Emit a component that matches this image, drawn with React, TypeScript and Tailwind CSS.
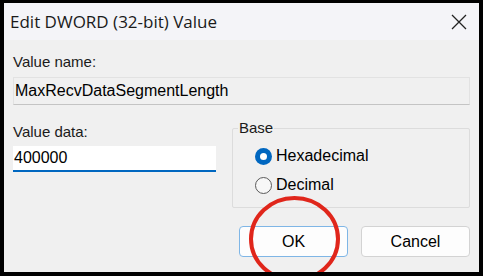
import React from "react";

const FONT = { fontFamily: '"Liberation Sans", Arial, sans-serif' };

function Radio({ checked, label }: { checked?: boolean; label: string }) {
  return (
    <div className="flex items-center h-[24px]">
      {checked ? (
        <span className="w-[17px] h-[17px] rounded-full bg-[#0067c0] flex items-center justify-center">
          <span className="w-[7px] h-[7px] rounded-full bg-white" />
        </span>
      ) : (
        <span className="w-[17px] h-[17px] rounded-full border border-[#5a5a5a] bg-[#f7f7f7]" />
      )}
      <span className="ml-[4px] text-[16px] text-black">{label}</span>
    </div>
  );
}

export default function App() {
  return (
    <div
      className="w-[483px] h-[276px] bg-black pt-[3px] pl-[4px] pr-[4px] pb-[4px]"
      style={FONT}
    >
      <div className="relative w-full h-full overflow-hidden bg-[#f0f0f0] flex flex-col">
        {/* Title bar */}
        <div className="h-[37px] shrink-0 bg-[#f4f4f8] flex items-center justify-between pl-[6px] pr-[11px]">
          <span
            className="text-[17px] text-[#1a1a1a]"
            style={{ fontFamily: '"Open Sans", "Noto Sans", sans-serif' }}
          >
            Edit DWORD (32-bit) Value
          </span>
          <svg width="16" height="16" viewBox="0 0 16 16" className="mr-[1px]">
            <path d="M1 1 L15 15 M15 1 L1 15" stroke="#222" strokeWidth="1.3" />
          </svg>
        </div>

        {/* Body */}
        <div className="flex-1 px-[9px] pt-[12px]">
          <div className="text-[15px] text-[#1a1a1a] leading-[20px]">Value name:</div>
          <div className="mt-[5px] h-[28px] border border-[#e2e2e2] border-b-[#c4c4c4] bg-[#f0f0f0] flex items-center px-[1px] text-[16px] text-black">
            MaxRecvDataSegmentLength
          </div>

          <div className="flex mt-[17px]">
            <div className="w-[203px]">
              <div className="text-[15px] text-[#1a1a1a] leading-[20px]">Value data:</div>
              <div className="mt-[4px] h-[26px] bg-white border-b-2 border-[#0067c0] flex items-center px-[1px] text-[16px] text-black">
                400000
              </div>
            </div>
            <div className="ml-[16px] flex-1 relative mt-[6px] h-[80px] border border-[#dcdcdc] rounded-[2px]">
              <span className="absolute -top-[11px] left-[5px] px-[1px] bg-[#f0f0f0] text-[15px] text-[#1a1a1a] leading-[20px]">
                Base
              </span>
              <div className="pl-[22px] pt-[15px] flex flex-col gap-[5px]">
                <Radio checked label="Hexadecimal" />
                <Radio label="Decimal" />
              </div>
            </div>
          </div>

          <div className="flex justify-end gap-[13px] mt-[18px]">
            <button className="w-[109px] h-[31px] rounded-[4px] bg-[#fdfdfd] border border-[#7fb6e6] text-[16px] text-black">
              OK
            </button>
            <button className="w-[109px] h-[31px] rounded-[4px] bg-[#fdfdfd] border border-[#d3d3d3] text-[16px] text-black">
              Cancel
            </button>
          </div>
        </div>

        {/* Annotation circle */}
        <svg
          className="absolute left-0 top-0 pointer-events-none"
          width="475"
          height="269"
          viewBox="0 0 475 269"
        >
          <ellipse cx="290.5" cy="236" rx="43.5" ry="41" fill="none" stroke="#e0261b" strokeWidth="4" />
        </svg>
      </div>
    </div>
  );
}
